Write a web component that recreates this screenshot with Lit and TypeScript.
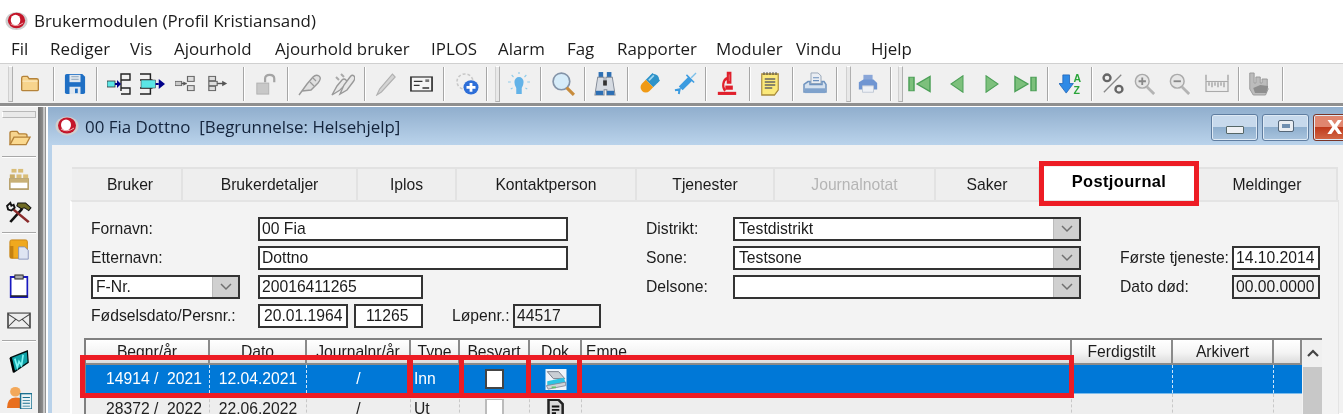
import { LitElement, html, css, svg } from "lit";
import { customElement } from "lit/decorators.js";

const S = (w: number, h: number, body: unknown) =>
  html`<svg width=${w} height=${h} viewBox="0 0 24 24" preserveAspectRatio="none">${body}</svg>`;

const folder = (w = 20, h = 19) => S(w, h, svg`<path d="M2 7V5q0-2 2-2h5l2 3h9q2 0 2 2v12q0 1-1 1H3q-1 0-1-1z" fill="#f7d48d" stroke="#b5833a" stroke-width="1.6"/><path d="M3 9h18" stroke="#fbe8bd" stroke-width="1.6"/>`);
const folderOpen = S(24, 20, svg`<path d="M3 20V6q0-2 2-2h5l2 3h6q2 0 2 2v2" fill="#f7d48d" stroke="#b5833a" stroke-width="1.4"/><path d="M3 20l4-9h16l-4 9z" fill="#fbd98f" stroke="#b5833a" stroke-width="1.4"/>`);
const save = S(22, 22, svg`<path d="M1 3q0-2 2-2h17l3 3v17q0 2-2 2H3q-2 0-2-2z" fill="#1f6fc4"/><rect x="6" y="2" width="12" height="8" fill="#dfe7ef"/><path d="M8 4h8M8 7h8" stroke="#9fb3c6" stroke-width="1.2"/><rect x="6" y="15" width="12" height="8" fill="#dfe7ef"/><rect x="12" y="17" width="3" height="5" fill="#1f6fc4"/>`);
const treeA = S(24, 24, svg`<path d="M14 5V2h9v6h-9M14 5v14M14 16h9v6h-9" fill="none" stroke="#222" stroke-width="1.4"/><rect x="0" y="9" width="8" height="6" fill="#5be6e6" stroke="#333" stroke-width=".8"/><path d="M8 12h3" stroke="#00008a" stroke-width="2"/><path d="M10 8l4 4-4 4z" fill="#00008a"/>`);
const treeB = S(25, 24, svg`<path d="M0 2h10v20H0M0 8h12M0 16h12" fill="none" stroke="#222" stroke-width="1.4"/><rect x="1" y="8" width="14" height="8" fill="#5be6e6" stroke="#333" stroke-width=".5"/><path d="M15 12h3" stroke="#00008a" stroke-width="2"/><path d="M18 7l6 5-6 5z" fill="#00008a"/>`);
const treeC = S(20, 17, svg`<rect x="0" y="9" width="8" height="6" fill="#c9c9c9" stroke="#666" stroke-width="1.2"/><path d="M8 12h6" stroke="#555" stroke-width="2"/><path d="M10 9l4 3-4 3z" fill="#555"/><rect x="15" y="2" width="8" height="7" fill="#ddd" stroke="#666" stroke-width="1.4"/><rect x="15" y="15" width="8" height="7" fill="#ddd" stroke="#666" stroke-width="1.4"/>`);
const treeD = S(20, 17, svg`<rect x="1" y="2" width="8" height="6" fill="#ddd" stroke="#666" stroke-width="1.4"/><rect x="1" y="16" width="8" height="6" fill="#ddd" stroke="#666" stroke-width="1.4"/><rect x="1" y="9" width="10" height="6" fill="#ddd" stroke="#666" stroke-width="1.4"/><path d="M11 12h7" stroke="#555" stroke-width="2"/><path d="M17 8l6 4-6 4z" fill="#555"/>`);
const lock = S(22, 22, svg`<rect x="2" y="11" width="13" height="12" fill="#c8c8c8" stroke="#b0b0b0"/><path d="M11 10V6q0-4 5-4t5 4v4" fill="none" stroke="#a4a4a4" stroke-width="2.400"/>`);
const pin = S(24, 24, svg`<path d="M1 23l8-11 6-7q3-3 6-1t-1 7l-7 7-9 1z" fill="#e0e0e0" stroke="#999" stroke-width="1.400"/><path d="M12 10l4 4M15 6l3 3" stroke="#999" stroke-width="1.200"/>`);
const pins = S(24, 24, svg`<path d="M1 23l5-9 5-6q2-2 4 0t-1 5l-5 5z" fill="#e8e8e8" stroke="#999" stroke-width="1.400"/><path d="M9 22l4-9 6-8q2-3 4-1t-1 6l-6 8z" fill="#e8e8e8" stroke="#999" stroke-width="1.400"/><path d="M5 5l3 3M10 2l3 3" stroke="#aaa" stroke-width="2"/>`);
const pen = S(22, 24, svg`<path d="M2 23l3-6L19 2l3 3L7 20z" fill="#d4d4d4" stroke="#b0b0b0" stroke-width="1.200"/>`);
const card = S(23, 16, svg`<rect x="1" y="1.500" width="22" height="21" fill="#f5f5f5" stroke="#333" stroke-width="1.800"/><path d="M4 8h9M4 14h6M13 18h7" stroke="#333" stroke-width="2"/><rect x="16" y="5" width="4" height="4" fill="#777"/>`);
const addIco = S(24, 23, svg`<circle cx="10" cy="10" r="8" fill="none" stroke="#c8c8c8" stroke-width="1.600" stroke-dasharray="3 2"/><circle cx="16" cy="16" r="7.500" fill="#2d6ed8"/><path d="M16 11.500v9M11.500 16h9" stroke="#fff" stroke-width="2.800"/>`);
const bulb = S(22, 24, svg`<path d="M7 10a5 5 0 1 1 10 0q0 3-2 6v6h-6v-6q-2-3-2-6z" fill="#63b3e8"/><g stroke="#8fcbe9" stroke-width="1.200"><path d="M12 0v2M4 3l2 2M20 3l-2 2M0 10h3M21 10h3M3 17l2-1M21 17l-2-1"/></g>`);
const mag = S(25, 25, svg`<circle cx="10" cy="10" r="8" fill="#d6ecf9" stroke="#8494a8" stroke-width="1.600"/><path d="M15 16l7 7" stroke="#c88c3c" stroke-width="3"/>`);
const binoc = S(22, 25, svg`<rect x="5" y="1" width="5" height="5" fill="#2d6fb4"/><rect x="14" y="1" width="5" height="5" fill="#2d6fb4"/><path d="M4 6h7v7h2V6h7l3 17h-9v-5h-3v5H1z" fill="#d6dbe2" stroke="#7f8794"/><rect x="2" y="19" width="8" height="4" fill="#2d6fb4"/><rect x="14" y="19" width="8" height="4" fill="#2d6fb4"/><rect x="10" y="9" width="4" height="5" fill="#333"/>`);
const pill = S(21, 21, svg`<g transform="rotate(45 12 12)"><rect x="6" y="1" width="12" height="11" fill="#2e93c9"/><path d="M6 12h12v6a6 6 0 0 1-12 0z" fill="#f09a16"/><path d="M6 5a6 6 0 0 1 12 0H6z" fill="#2e93c9"/><rect x="8" y="2" width="2" height="8" fill="#9fd6f0"/></g>`);
const syringe = S(23, 23, svg`<path d="M5 15L15 5l4 4L9 19z" fill="#3b9be0"/><path d="M1 19l5-1-1 5M4 20l2-2" stroke="#3b9be0" stroke-width="2" fill="none"/><path d="M18 6l5-5" stroke="#7cc0ea" stroke-width="1.400"/><path d="M13 3l8 8" stroke="#3b9be0" stroke-width="1.500"/>`);
const micro = S(20, 25, svg`<g fill="none" stroke="#e0202c" stroke-width="2.600"><path d="M13 2h3v9h-3zM12 7a7 7 0 0 0-2 12"/></g><path d="M10 14h9v4h-9z" fill="#e0202c"/><rect x="1" y="20" width="22" height="3" fill="#e0202c"/>`);
const note = S(18, 24, svg`<path d="M1 2h22v16l-5 5H1z" fill="#fbe97a" stroke="#a88a3a" stroke-width="1.500"/><path d="M5 7h14M5 10h14M5 13h14M5 16h10" stroke="#666" stroke-width="1.300"/><path d="M4 0v3M8 0v3M12 0v3M16 0v3M20 0v3" stroke="#444"/>`);
const printer = S(24, 23, svg`<path d="M8 1h7l3 3v8H8z" fill="#e9edf3" stroke="#9aa8b8"/><path d="M10 6h6M10 9h6" stroke="#6a8fbd" stroke-width="1.200"/><path d="M5 10h2v3h12v-3h2l2 3v8H1v-8z" fill="#d5e1ee" stroke="#6f93bf" stroke-width="1.500"/><rect x="2" y="17" width="20" height="5" fill="#7fa2cc"/>`);
const print2 = S(22, 22, svg`<rect x="7" y="2" width="10" height="6" fill="#8aa6d8"/><path d="M2 10l5-3h11l4 4v7H2z" fill="#6f95d2"/><path d="M6 14h12v7H6z" fill="#eef1f6" stroke="#c0c8d4"/>`);
const navG = (d: string, w = 22) => S(w, 18, svg`<g fill="#7dc07c" stroke="#4da058" stroke-width="1.500">${svg`<path d=${d}/>`}</g>`);
const sort = S(23, 23, svg`<path d="M4 3h7v9h4l-7.500 10L0 12h4z" fill="#2f8ae6" stroke="#1c62b6" stroke-width=".8"/><text x="15" y="10" font-size="11" font-weight="700" font-family="Liberation Sans" fill="#2aa53a">A</text><text x="15" y="23" font-size="11" font-weight="700" font-family="Liberation Sans" fill="#2aa53a">Z</text>`);
const pct = S(22, 21, svg`<circle cx="5.500" cy="5.500" r="3.800" fill="none" stroke="#666" stroke-width="2.600"/><circle cx="18.500" cy="18.500" r="3.800" fill="none" stroke="#666" stroke-width="2.600"/><path d="M2 22L21 2" stroke="#888" stroke-width="1.400"/>`);
const zoomI = (plus: boolean) => S(22, 22, svg`<circle cx="9" cy="9" r="7.500" fill="#e6e6e6" stroke="#aaa" stroke-width="1.600"/><path d="M5 9h8${plus ? "M9 5v8" : ""}" stroke="#888" stroke-width="2"/><path d="M14 15l8 8" stroke="#b4b4b4" stroke-width="3"/>`);
const ruler = S(24, 20, svg`<rect x="1" y="9" width="22" height="12" fill="#eee" stroke="#aaa" stroke-width="1.300"/><path d="M1 1v7M23 1v7M4 10v4M7 10v6M10 10v4M13 10v6M16 10v4M19 10v6" stroke="#999" stroke-width="1.200"/>`);
const hand = S(21, 24, svg`<path d="M2 1h5v10h2V5h5v6h2V7h6v8l1 2-3 6H6l-4-6z" fill="#bcbcbc" stroke="#999"/><path d="M6 16l8-3 9 1-2 7H8z" fill="#8e8e8e"/>`);
const palette = S(20, 22, svg`<rect x="3" y="1" width="6" height="4" fill="#d9bd78"/><rect x="11" y="1" width="6" height="4" fill="#d9bd78"/><rect x="1" y="7" width="6" height="4" fill="#c9ad68"/><rect x="9" y="7" width="6" height="4" fill="#d9bd78"/><rect x="17" y="7" width="6" height="4" fill="#d9bd78"/><rect x="1" y="12" width="22" height="11" fill="#fff" stroke="#b39c64" stroke-width="1.800"/><rect x="1" y="12" width="22" height="4" fill="#c8b077"/>`);
const tools = S(26, 23, svg`<path d="M4 22L15 8" stroke="#111" stroke-width="2.400"/><path d="M11 2h7l5 5-2 3-4-3-3 1-4-3z" fill="#6e6a24" stroke="#111" stroke-width="1"/><path d="M7 9l14 13" stroke="#8a2a2a" stroke-width="2.400"/><path d="M1 5l3-3 1 3 2-1 1 3-3 3-3-1z" fill="none" stroke="#111" stroke-width="1.800"/>`);
const docs = S(21, 21, svg`<rect x="1" y="1" width="20" height="21" rx="2" fill="#f0a91e" stroke="#c58110"/><rect x="1" y="8" width="4" height="14" fill="#c58110"/><path d="M11 9h7l4 4v10H11z" fill="#dfe5f2" stroke="#8390b8"/>`);
const clip = S(20, 24, svg`<rect x="2" y="3" width="20" height="20" fill="#fff" stroke="#1a1ac0" stroke-width="2"/><rect x="7" y="1" width="10" height="4" fill="#aaa" stroke="#222"/><path d="M2 22h20" stroke="#222" stroke-width="1.500"/>`);
const mail = S(24, 17, svg`<rect x="1" y="1.500" width="22" height="21" fill="#eee" stroke="#444" stroke-width="1.600"/><path d="M1 3l11 10L23 3M1 21l8-11M23 21l-8-11" fill="none" stroke="#444" stroke-width="1.200"/>`);
const wIcon = S(20, 23, svg`<path d="M2 8l20-7 1 12L6 23z" fill="#0fa3a8" stroke="#011" stroke-width="1.500"/><path d="M7 9l3 9 2-6 3 4 2-11" fill="none" stroke="#7df4f4" stroke-width="2"/><path d="M2 8l4 15" stroke="#000" stroke-width="3"/>`);
const user = S(25, 23, svg`<circle cx="8" cy="6" r="5" fill="#f3a85a"/><path d="M0 23q0-11 8-11t8 6v5z" fill="#e86f1e"/><rect x="13" y="8" width="11" height="16" fill="#e9f3f5" stroke="#1a6f8f" stroke-width="1.400"/><path d="M15 12h7M15 15h7M15 18h7M15 21h7" stroke="#1a6f8f"/>`);
const logo = (w: number) => html`<svg width=${w} height=${Math.round(w * .85)} viewBox="0 0 24 20"><ellipse cx="12" cy="10" rx="11.500" ry="9.500" fill="#cfcfcf"/><ellipse cx="12" cy="9.500" rx="9" ry="8" fill="#c4162a"/><ellipse cx="11" cy="9" rx="5" ry="5.500" fill="#fff"/><path d="M6 13q6 4 13-1" stroke="#f0b6b6" fill="none"/></svg>`;
const scanner = html`<svg width="22" height="21" viewBox="0 0 24 24"><rect x="0" y="0" width="24" height="24" fill="#eef4fa"/><path d="M2 3h13l7 8H9z" fill="#c9ced4" stroke="#6c7480"/><path d="M2 14l19-4 2 6-21 4z" fill="#2cc4e4"/><path d="M1 19l22-4v4L3 23z" fill="#cfd4d8" stroke="#889"/><rect x="7" y="20" width="5" height="2" fill="#5fc46a"/></svg>`;
const docIco = html`<svg width="20" height="20" viewBox="0 0 24 24"><path d="M3 1h12l5 5v17H3z" fill="#d8d8d8" stroke="#222" stroke-width="3"/><path d="M7 9h9M7 13h9M7 17h5" stroke="#111" stroke-width="2.200"/><rect x="17" y="18" width="6" height="6" fill="#222"/></svg>`;

type TItem = [string, number, number?, unknown?];
const toolbar: TItem[] = [
  ["g", 8], ["i", 30, 22, folder()], ["s", 53], ["i", 75, 22, save], ["s", 96],
  ["i", 119, 24, treeA], ["i", 152, 25, treeB], ["i", 185, 20, treeC], ["i", 218, 20, treeD], ["s", 243],
  ["i", 266, 22, lock], ["s", 287], ["i", 310, 24, pin], ["i", 343, 24, pins], ["s", 364],
  ["i", 386, 22, pen], ["i", 421, 23, card], ["s", 443], ["i", 467, 26, addIco], ["s", 486], ["g", 495],
  ["i", 519, 24, bulb], ["s", 540], ["i", 563, 26, mag], ["s", 584], ["i", 605, 23, binoc], ["s", 627],
  ["i", 649, 22, pill], ["i", 685, 24, syringe], ["s", 705], ["i", 727, 22, micro], ["s", 749],
  ["i", 770, 19, note], ["s", 792], ["i", 815, 24, printer], ["s", 836], ["g", 846], ["i", 868, 22, print2],
  ["s", 890], ["g", 898],
  ["i", 920, 24, navG("M1 3h5v18H1zM22 2v20L9 12z", 24)], ["i", 957, 16, navG("M21 1v22L3 12z", 16)],
  ["i", 992, 16, navG("M3 1v22l18-11z", 16)], ["i", 1025, 24, navG("M2 2v20l13-10zM18 3h5v18h-5z", 24)],
  ["s", 1047], ["i", 1070, 24, sort], ["s", 1091], ["i", 1113, 23, pct], ["i", 1145, 22, zoomI(true)],
  ["i", 1180, 22, zoomI(false)], ["i", 1217, 24, ruler], ["s", 1238], ["i", 1258, 22, hand], ["s", 1282],
];

const tabs: [string, number, string?][] = [
  ["Bruker", 111, "first"], ["Brukerdetaljer", 175], ["Iplos", 99], ["Kontaktperson", 180], ["Tjenester", 138],
  ["Journalnotat", 161, "off"], ["Saker", 104], ["Postjournal", 158, "on"], ["Meldinger", 140],
];
const heads = ["Begnr/år", "Dato", "Journalnr/år", "Type", "Besvart", "Dok", "Emne", "Ferdigstilt", "Arkivert", ""];

@customElement("app-root")
export class AppRoot extends LitElement {
  static styles = css`
    :host { display: block; width: 1343px; height: 414px; overflow: hidden; background: #fff; color: #1c1c1c;
      font-family: "Liberation Sans", Arial, sans-serif; font-size: 15.7px; filter: blur(.35px); }
    .title { height: 36px; display: flex; align-items: center; padding: 5px 0 0 5px; box-sizing: border-box;
      font-family: "Open Sans", sans-serif; font-size: 16.9px; gap: 6px; }
    .menu { height: 25px; display: flex; align-items: center; font-family: "Open Sans", sans-serif; font-size: 16.9px; }
    .menu span { white-space: nowrap; }
    .tb { margin-top: 2px; height: 39px; background: #f0f0f0; border-top: 1px solid #d0d0d0; display: flex; align-items: center;
      border-bottom: 3px solid #8f8f8f; box-sizing: content-box; }
    .tb > * { flex: none; }
    .i { display: flex; align-items: center; justify-content: center; height: 39px; }
    .s { width: 1px; height: 34px; background: #a6a6a6; border-right: 1px solid #fff; }
    .g { width: 3px; height: 34px; border: 1px solid #b0b0b0; border-top-color: #fff; border-left-color: #d0d0d0; background: #e8e8e8; }
    .main { display: flex; height: 307px; border-top: 1px solid #fff; box-sizing: border-box; }
    .side { width: 38px; background: #f0f0f0; display: flex; flex-direction: column; align-items: center; flex: none; padding-top: 4px; box-sizing: border-box; }
    .sg { width: 34px; height: 7px; border: 1px solid #b8b8b8; border-left-color: #fff; box-sizing: border-box; background: #e9e9e9; margin-bottom: 6px; flex: none; }
    .sic { display: flex; align-items: center; justify-content: center; flex: none; }
    .h28 { height: 28px; } .h41 { height: 41px; } .h26 { height: 26px; } .h30 { height: 30px; }
    .h44 { height: 44px; } .h24 { height: 24px; } .h38 { height: 38px; } .h34 { height: 34px; }
    .ss { width: 34px; height: 1px; background: #a8a8a8; border-bottom: 1px solid #fff; flex: none; }
    .mt4 { margin-top: 4px; } .mt7 { margin-top: 7px; } .mt8 { margin-top: 8px; }
    .bar { width: 8px; flex: none; background: linear-gradient(90deg, #6f6f6f, #8c8c8c 60%, #e8e8e8 75%, #777); }
    .win { flex: 1; min-width: 0; border-left: 4px solid #b9d2ea; background: #f2f2f2; margin-left: 2px; }
    .cap { height: 38px; margin-left: -4px; background: linear-gradient(#90aecd, #bad3eb); display: flex; align-items: center;
      padding-left: 7px; gap: 6px; color: #14243c; font-family: "Open Sans", sans-serif; font-size: 16.9px; white-space: pre; }
    .cb { display: flex; gap: 4px; margin-left: auto; margin-top: 2px; flex: none; }
    .b { width: 47px; height: 27px; box-sizing: border-box; border: 1px solid #5f7da0; border-radius: 3px; display: flex; align-items: center; justify-content: center;
      background: linear-gradient(#c7d9ec 0 50%, #8fafce 50%, #a9c4de); box-shadow: inset 0 0 0 1px #dfeaf5; }
    .b.x { width: 60px; background: linear-gradient(#e0866f 0 50%, #bf3a1c 50%, #d36a48); border-color: #7a3527; justify-content: flex-start; padding-left: 13px; margin-right: -30px; font-weight: 700; color: #fff; font-size: 20px; font-family: "DejaVu Sans", sans-serif; }
    .min { width: 16px; height: 6px; background: #eef0f3; border: 1px solid #566; border-radius: 1px; margin-top: 5px; }
    .max { width: 8px; height: 4px; background: #6f8fb0; border: 3px solid #e9edf2; outline: 1px solid #567; border-radius: 1px; margin-top: -2px; }
    .body { padding: 22px 0 0 18px; width: 1287px; box-sizing: border-box; }
    .tabs { display: flex; height: 33px; box-sizing: border-box; padding-left: 2px; }
    .tab { flex: none; box-sizing: border-box; display: flex; align-items: center; justify-content: center; background: #eeeeee;
      border-top: 2px solid #e2e2e2; border-right: 2px solid #e2e2e2; position: relative; white-space: nowrap; }
    .tab.first { padding-left: 7px; }
    .tab.off { color: #b5b5b5; }
    .tab.on { background: #fff; font-weight: 700; border: none; padding-bottom: 5px; z-index: 2; color: #000; font-size: 16.4px; letter-spacing: .4px; }
    .tab.on::after { content: ""; position: absolute; left: -1px; right: -1px; top: -6px; bottom: -6px; border: 5px solid #ed1c24; box-sizing: border-box; }
    .panel { height: 214px; background: #f3f3f3; border-top: 2px solid #e4e4e4; border-left: 2px solid #fff; padding: 15px 0 0 12px; box-sizing: border-box; border-right: 1px solid #e4e4e4; }
    .form { display: flex; margin-left: 7px; height: 111px; }
    .col { display: flex; flex-direction: column; gap: 5px; flex: none; }
    .col1 { width: 555px; }
    .col2 { width: 474px; }
    .col3 { width: 200px; padding-top: 29px; }
    .r { display: flex; align-items: center; height: 24px; flex: none; }
    .lab { flex: none; white-space: nowrap; }
    .l167 { width: 167px; } .l87 { width: 87px; } .l112 { width: 112px; }
    .lop { margin-left: 29px; width: 61px; }
    .f { box-sizing: border-box; height: 24px; border: 2px solid #333; background: #fff; padding-left: 2px; display: flex; align-items: center; white-space: nowrap; overflow: hidden; flex: none; }
    .f.ro { background: #f3f3f3; }
    .w310 { width: 310px; } .w165 { width: 165px; } .w88 { width: 88px; } .w348 { width: 348px; }
    .pl4 { padding-left: 4px; }
    .fnr { width: 149px; margin-right: 18px; padding-left: 3px; }
    .dob { width: 90px; padding-left: 4px; }
    .pnr { width: 69px; margin-left: 6px; padding-left: 10px; }
    .arrow { margin-left: auto; width: 25px; height: 20px; background: #d0d0d0; border-left: 1px solid #bbb; display: flex; align-items: center; justify-content: center; flex: none; }
    .tbl { position: relative; margin-top: 10px; width: 1238px; height: 100px; border: 2px solid #808080; border-bottom: none; box-sizing: border-box; }
    .tbl-inner { display: flex; }
    .grid { width: 1216px; flex: none; }
    .rw { display: grid; grid-template-columns: 124px 97px 104px 49px 70px 52px 490px 101px 101px 28px; }
    .hd { height: 25px; display: flex; align-items: center; justify-content: center; background: linear-gradient(#fff, #f4f4f4 55%, #dcdcdc); border-right: 2px solid #8a8a8a; border-bottom: 2px solid #8a8a8a; box-sizing: border-box; white-space: nowrap; overflow: hidden; }
    .hd.l { justify-content: flex-start; padding-left: 4px; }
    .row1 { height: 29px; background: #0078d7; color: #fff; border-bottom: 1px solid #7cbcec; box-sizing: border-box; }
    .row2 { height: 29px; background: #eeeeee; color: #222; }
    .c { display: flex; align-items: center; justify-content: center; white-space: pre; border-right: 1px dashed rgba(190,190,190,.8); box-sizing: border-box; overflow: hidden; }
    .c.n { border-right-color: #cfe6fa; }
    .c.l { justify-content: flex-start; padding-left: 3px; }
    .c.e { border-right-color: transparent; }
    .chk { width: 19px; height: 20px; background: #fff; border: 2px solid #444; box-sizing: border-box; flex: none; }
    .chk2 { border-color: #bbb; height: 24px; margin-top: 4px; border-width: 1px 2px; }
    .scr { width: 19px; margin-left: 1px; flex: none; background: #c8c8c8; }
    .up { height: 27px; background: #f0f0f0; display: flex; align-items: center; justify-content: center; }
    .red { position: absolute; border: 5px solid #ed1c24; box-sizing: border-box; top: 15px; height: 43px; pointer-events: none; }
    .a { left: -6px; width: 994px; }
    .a2 { left: -6px; width: 333px; }
    .d1 { left: 321px; width: 57px; }
    .d2 { left: 440px; width: 56px; }
  `;

  private bar() {
    let cur = 0;
    return toolbar.map(([t, x, w, ic]) => {
      if (t === "i") {
        const left = x - (w! + 6) / 2;
        const m = left - cur;
        cur = left + w! + 6;
        return html`<div class="i" style="margin-left:${m}px;width:${w! + 6}px">${ic}</div>`;
      }
      const width = t === "g" ? 5 : 2;
      const m = x - cur;
      cur = x + width;
      return html`<div class=${t} style="margin-left:${m}px"></div>`;
    });
  }

  render() {
    const menu: [string, number][] = [["Fil", 11], ["Rediger", 50], ["Vis", 130], ["Ajourhold", 174], ["Ajourhold bruker", 275], ["IPLOS", 431], ["Alarm", 498], ["Fag", 567], ["Rapporter", 617], ["Moduler", 716], ["Vindu", 796], ["Hjelp", 871]];
    const chev = html`<svg width="14" height="8" viewBox="0 0 14 8"><path d="M2 1l5 5 5-5" fill="none" stroke="#707070" stroke-width="1.500"/></svg>`;
    return html`
      <div class="title">${logo(23)}<span>Brukermodulen (Profil Kristiansand)</span></div>
      <div class="menu">${menu.map(([t, x], i) => html`<span style="width:${(i + 1 < menu.length ? menu[i + 1][1] : x + 60) - x}px;${i === 0 ? `margin-left:${x}px` : ""}">${t}</span>`)}</div>
      <div class="tb">${this.bar()}</div>
      <div class="main">
        <div class="side">
          <div class="sg"></div>
          <div class="sic h28">${folderOpen}</div><div class="ss mt4"></div>
          <div class="sic h41">${palette}</div><div class="sic h26">${tools}</div><div class="ss mt7"></div>
          <div class="sic h30">${docs}</div><div class="sic h44">${clip}</div><div class="sic h24">${mail}</div><div class="ss mt8"></div>
          <div class="sic h38">${wIcon}</div><div class="sic h34">${user}</div>
        </div>
        <div class="bar"></div>
        <div class="win">
          <div class="cap">${logo(24)}<span>00 Fia Dottno  [Begrunnelse: Helsehjelp]</span>
            <div class="cb"><div class="b"><div class="min"></div></div><div class="b"><div class="max"></div></div><div class="b x">X</div></div>
          </div>
          <div class="body">
            <div class="tabs">${tabs.map(([t, w, c]) => html`<div class="tab ${c ?? ""}" style="width:${w}px">${t}</div>`)}</div>
            <div class="panel">
              <div class="form">
                <div class="col col1">
                  <div class="r"><span class="lab l167">Fornavn:</span><div class="f w310">00 Fia</div></div>
                  <div class="r"><span class="lab l167">Etternavn:</span><div class="f w310">Dottno</div></div>
                  <div class="r"><div class="f fnr">F-Nr.<div class="arrow">${chev}</div></div><div class="f w165">20016411265</div></div>
                  <div class="r"><span class="lab l167">Fødselsdato/Persnr.:</span><div class="f dob">20.01.1964</div><div class="f pnr">11265</div><span class="lab lop">Løpenr.:</span><div class="f ro w88">44517</div></div>
                </div>
                <div class="col col2">
                  <div class="r"><span class="lab l87">Distrikt:</span><div class="f w348 pl4">Testdistrikt<div class="arrow">${chev}</div></div></div>
                  <div class="r"><span class="lab l87">Sone:</span><div class="f w348 pl4">Testsone<div class="arrow">${chev}</div></div></div>
                  <div class="r"><span class="lab l87">Delsone:</span><div class="f w348"><div class="arrow">${chev}</div></div></div>
                </div>
                <div class="col col3">
                  <div class="r"><span class="lab l112">Første tjeneste:</span><div class="f w88">14.10.2014</div></div>
                  <div class="r"><span class="lab l112">Dato død:</span><div class="f ro w88">00.00.0000</div></div>
                </div>
              </div>
              <div class="tbl">
                <div class="tbl-inner">
                  <div class="grid">
                    <div class="rw">${heads.map((h) => html`<div class="hd ${h === "Emne" ? "l" : ""}">${h}</div>`)}</div>
                    <div class="rw row1">
                      <div class="c n">   14914 /  2021</div><div class="c n">12.04.2021</div><div class="c n">/</div><div class="c l n">Inn</div>
                      <div class="c n"><div class="chk"></div></div><div class="c n">${scanner}</div><div class="c n"></div><div class="c n"></div><div class="c n"></div><div class="c e"></div>
                    </div>
                    <div class="rw row2">
                      <div class="c">   28372 /  2022</div><div class="c">22.06.2022</div><div class="c">/</div><div class="c l">Ut</div>
                      <div class="c"><div class="chk chk2"></div></div><div class="c">${docIco}</div><div class="c"></div><div class="c"></div><div class="c"></div><div class="c e"></div>
                    </div>
                  </div>
                  <div class="scr"><div class="up"><svg width="14" height="9" viewBox="0 0 14 9"><path d="M2 7l5-5 5 5" fill="none" stroke="#444" stroke-width="2.200"/></svg></div></div>
                </div>
                <div class="red a"></div><div class="red a2"></div><div class="red d1"></div><div class="red d2"></div>
              </div>
            </div>
          </div>
        </div>
      </div>
    `;
  }
}
